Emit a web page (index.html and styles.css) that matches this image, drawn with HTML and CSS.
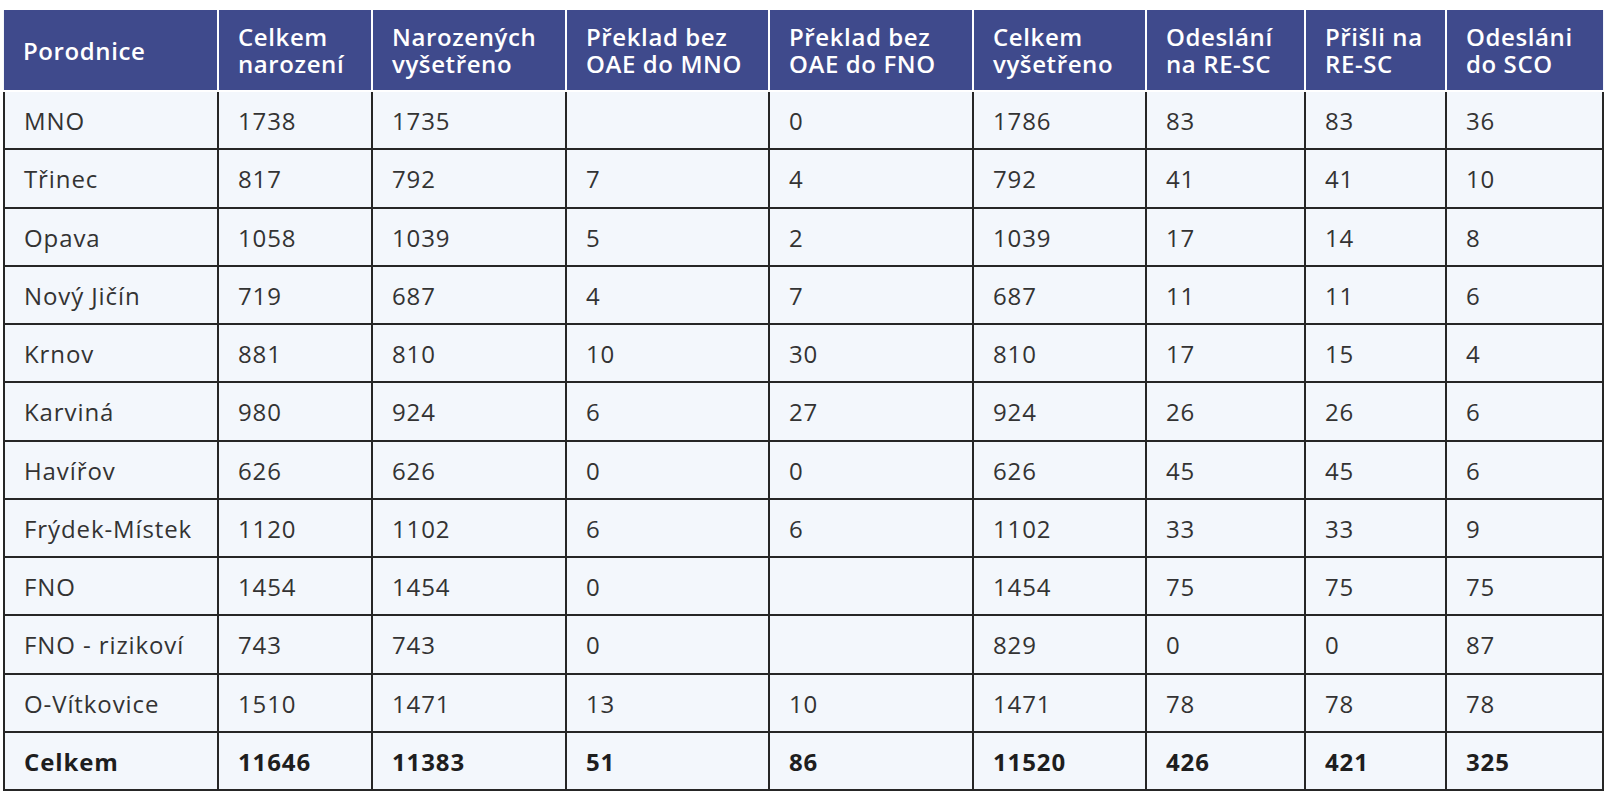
FILE: index.html
```html
<!DOCTYPE html>
<html lang="cs">
<head>
<meta charset="utf-8">
<title>Porodnice</title>
<link rel="stylesheet" href="styles.css">
</head>
<body>
<div class="wrap">
<table class="data">
<colgroup>
<col class="c1"><col class="c2"><col class="c3"><col class="c4"><col class="c5"><col class="c6"><col class="c7"><col class="c8"><col class="c9">
</colgroup>
<thead>
<tr>
<th>Porodnice</th>
<th>Celkem<br>narození</th>
<th>Narozených<br>vyšetřeno</th>
<th>Překlad bez<br>OAE do MNO</th>
<th>Překlad bez<br>OAE do FNO</th>
<th>Celkem<br>vyšetřeno</th>
<th>Odeslání<br>na RE-SC</th>
<th>Přišli na<br>RE-SC</th>
<th>Odesláni<br>do SCO</th>
</tr>
</thead>
<tbody>
<tr><td>MNO</td><td>1738</td><td>1735</td><td></td><td>0</td><td>1786</td><td>83</td><td>83</td><td>36</td></tr>
<tr><td>Třinec</td><td>817</td><td>792</td><td>7</td><td>4</td><td>792</td><td>41</td><td>41</td><td>10</td></tr>
<tr><td>Opava</td><td>1058</td><td>1039</td><td>5</td><td>2</td><td>1039</td><td>17</td><td>14</td><td>8</td></tr>
<tr><td>Nový Jičín</td><td>719</td><td>687</td><td>4</td><td>7</td><td>687</td><td>11</td><td>11</td><td>6</td></tr>
<tr><td>Krnov</td><td>881</td><td>810</td><td>10</td><td>30</td><td>810</td><td>17</td><td>15</td><td>4</td></tr>
<tr><td>Karviná</td><td>980</td><td>924</td><td>6</td><td>27</td><td>924</td><td>26</td><td>26</td><td>6</td></tr>
<tr><td>Havířov</td><td>626</td><td>626</td><td>0</td><td>0</td><td>626</td><td>45</td><td>45</td><td>6</td></tr>
<tr><td>Frýdek-Místek</td><td>1120</td><td>1102</td><td>6</td><td>6</td><td>1102</td><td>33</td><td>33</td><td>9</td></tr>
<tr><td>FNO</td><td>1454</td><td>1454</td><td>0</td><td></td><td>1454</td><td>75</td><td>75</td><td>75</td></tr>
<tr><td>FNO - rizikoví</td><td>743</td><td>743</td><td>0</td><td></td><td>829</td><td>0</td><td>0</td><td>87</td></tr>
<tr><td>O-Vítkovice</td><td>1510</td><td>1471</td><td>13</td><td>10</td><td>1471</td><td>78</td><td>78</td><td>78</td></tr>
<tr class="total"><td>Celkem</td><td>11646</td><td>11383</td><td>51</td><td>86</td><td>11520</td><td>426</td><td>421</td><td>325</td></tr>
</tbody>
</table>
</div>
</body>
</html>
```

FILE: styles.css
```css
html, body {
  margin: 0;
  padding: 0;
  background: #ffffff;
}

.wrap {
  padding: 10px 0 0 3px;
}

.data {
  border-collapse: collapse;
  table-layout: fixed;
  width: 1599px;
  font-family: "Open Sans", "Liberation Sans", sans-serif;
  font-size: 24px;
  letter-spacing: 0.9px;
  color: #333333;
  background: #f3f7fc;
}

.c1 { width: 214px; }
.c2 { width: 154px; }
.c3 { width: 194px; }
.c4 { width: 203px; }
.c5 { width: 204px; }
.c6 { width: 173px; }
.c7 { width: 159px; }
.c8 { width: 141px; }
.c9 { width: 157px; }

.data thead th {
  background: #3f4a8c;
  color: #ffffff;
  font-weight: 600;
  letter-spacing: 0.6px;
  text-align: left;
  height: 80px;
  padding: 0 4px 0 19px;
  line-height: 27px;
  border-left: 2px solid #ffffff;
  border-bottom: 2px solid #ffffff;
  vertical-align: middle;
  white-space: nowrap;
}

.data thead th:first-child {
  border-left: none;
}

.data tbody td {
  height: 54.25px;
  padding: 2px 4px 0 19px;
  line-height: 28px;
  border: 2px solid #262626;
  vertical-align: middle;
  white-space: nowrap;
}

.data tbody tr.total td {
  font-weight: 700;
  color: #1e1e1e;
}
```
